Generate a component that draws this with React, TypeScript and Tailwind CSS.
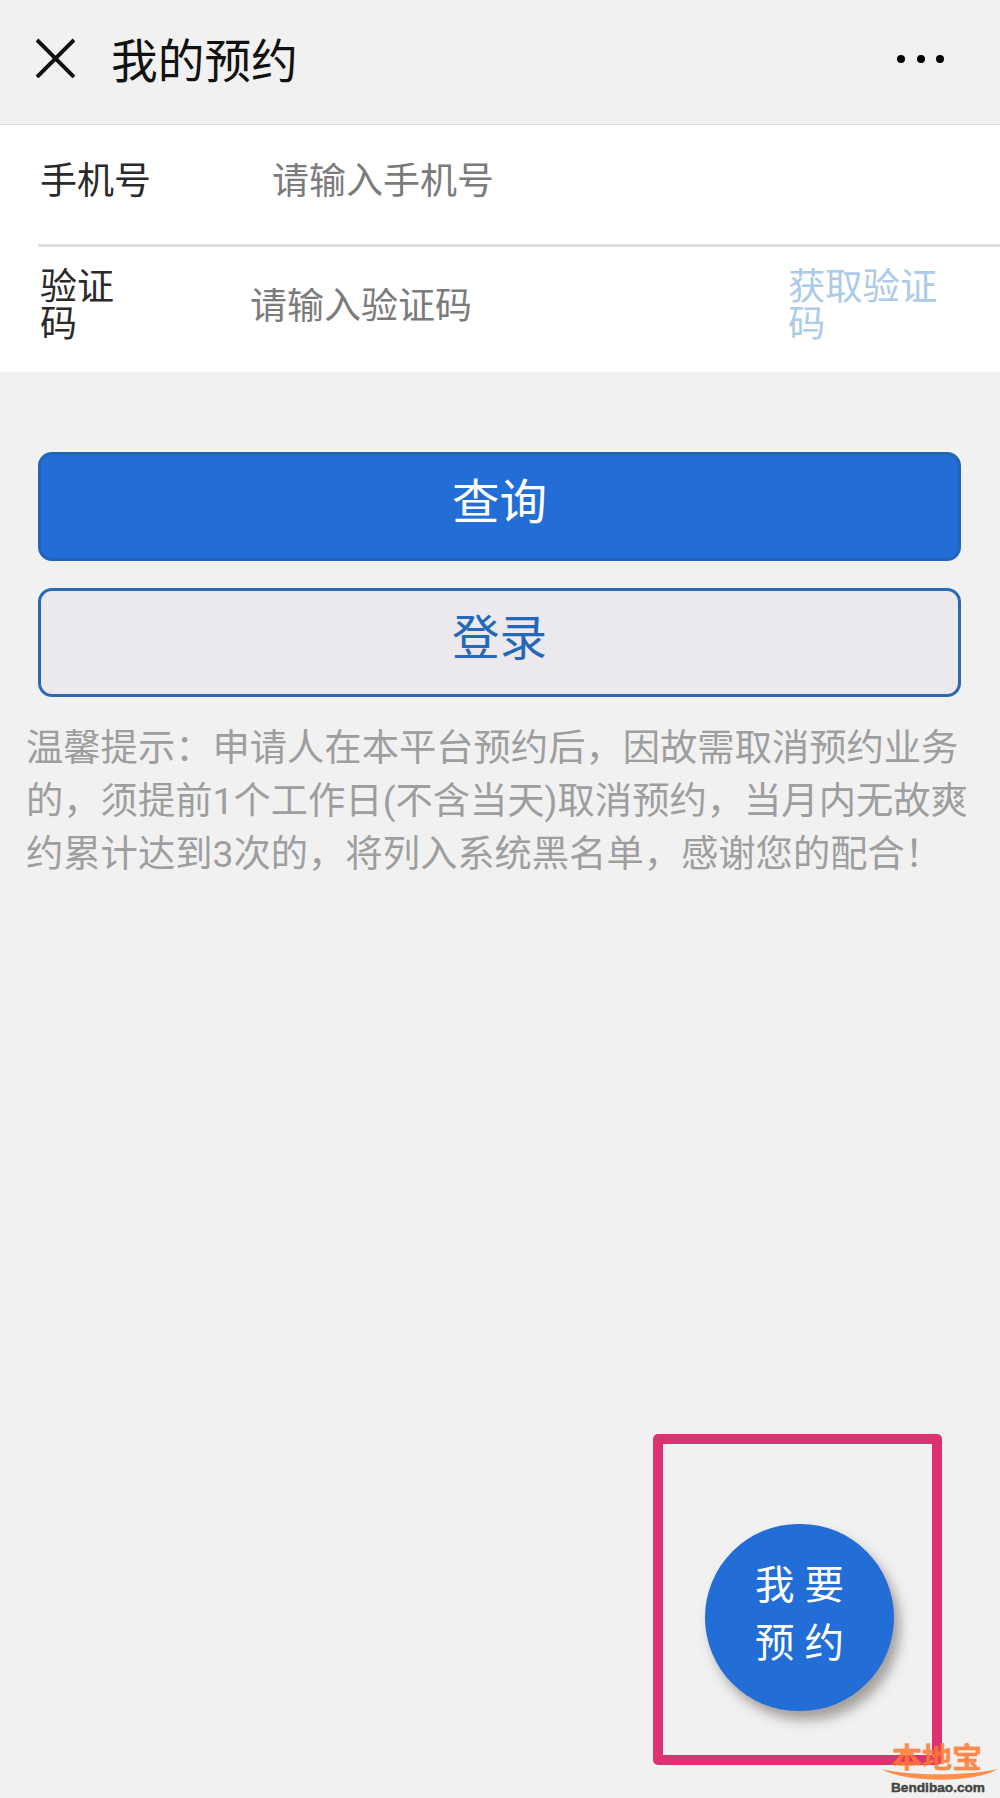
import React, { useState } from "react";

// Marca do site, sobreposta no canto inferior direito
function BendibaoLogo() {
  return (
    <svg width="122" height="68" viewBox="0 -10 122 68" className="absolute left-[878px] top-[1730px]">
      <text
        x="14"
        y="27.5"
        fontSize="28"
        fontWeight="700"
        textLength="90"
        lengthAdjust="spacingAndGlyphs"
        fill="#ff7a30"
        fillOpacity="0.85"
        stroke="#ff7a30"
        strokeWidth="0.4"
        fontFamily="'Noto Sans CJK SC', sans-serif"
      >
        本地宝
      </text>
      <path d="M3 29C32 36 90 36 120 29C96 43.5 28 43 3 29Z" fill="#fb8f4c" />
      <text
        x="13"
        y="51.5"
        fontSize="12.5"
        fontWeight="700"
        textLength="94"
        lengthAdjust="spacingAndGlyphs"
        fill="#444"
        stroke="#444"
        strokeWidth="0.4"
        fontFamily="'Liberation Sans', Arial, sans-serif"
      >
        Bendibao.com
      </text>
    </svg>
  );
}

export default function App() {
  const [phone, setPhone] = useState("");
  const [code, setCode] = useState("");

  return (
    <div className="relative w-[1000px] h-[1798px] overflow-hidden bg-[#f1f1f1] font-normal font-[Roboto,'Noto_Sans_CJK_SC',sans-serif]">
      {/* Barra superior */}
      <header className="flex h-[125px] items-center border-b border-[#dcdcdc] pl-9 pr-[56px] pb-1">
        <button aria-label="关闭" className="mt-[-5px]">
          <svg width="39" height="40" viewBox="0 0 39 40" fill="none" stroke="#111" strokeWidth="4">
            <path d="M1 2L38 39M38 2L1 39" />
          </svg>
        </button>
        <h1 className="ml-9 mt-[3px] text-[46.7px] leading-[60px] text-[#111]">我的预约</h1>
        <button aria-label="更多" className="ml-auto mt-[-2px] flex gap-[11.5px]">
          <span className="size-2 rounded-full bg-black" />
          <span className="size-2 rounded-full bg-black" />
          <span className="size-2 rounded-full bg-black" />
        </button>
      </header>

      {/* Formulário */}
      <section className="h-[247px] bg-white pl-[38px] text-[37px] leading-[37px]">
        <div className="flex h-[122px] items-start border-b-[3px] border-[#e1e1e1] pl-0.5 pt-[38px]">
          <label htmlFor="phone" className="w-[232px] text-[#2a2a2a]">手机号</label>
          <input
            id="phone"
            value={phone}
            onChange={(e) => setPhone(e.target.value)}
            placeholder="请输入手机号"
            className="h-[37px] w-[500px] outline-none placeholder:text-[#7b7b7b]"
          />
        </div>
        <div className="flex items-start pl-0.5 pt-[22px]">
          <label htmlFor="code" className="w-[80px] text-[#2a2a2a]">验证码</label>
          <input
            id="code"
            value={code}
            onChange={(e) => setCode(e.target.value)}
            placeholder="请输入验证码"
            className="ml-[130px] mt-[19px] h-[37px] w-[400px] outline-none placeholder:text-[#7b7b7b]"
          />
          <button className="ml-[138px] w-[160px] text-left text-[37.3px] text-[#abcbe8]">获取验证码</button>
        </div>
      </section>

      {/* Ações */}
      <div className="mt-20 flex flex-col gap-[27px] pl-[38px] pr-[39px] text-[47.5px]">
        <button className="h-[109px] rounded-[14px] border-[3px] border-[#2264b8] bg-[#226dd6] pb-2 leading-[60px] text-white">
          查询
        </button>
        <button className="h-[109px] rounded-[14px] border-[3px] border-[#2a6ab4] bg-[#ece9ee] pb-2 leading-[60px] text-[#2468ba]">
          登录
        </button>
      </div>

      <p className="mt-[25px] whitespace-nowrap pl-[26px] text-[37.3px] leading-[53px] text-[#9e9e9e]">
        温馨提示：申请人在本平台预约后，因故需取消预约业务
        <br />
        的，须提前1个工作日(不含当天)取消预约，当月内无故爽
        <br />
        约累计达到3次的，将列入系统黑名单，感谢您的配合！
      </p>

      {/* Botão flutuante com destaque */}
      <div className="absolute left-[653px] top-[1434px] h-[331px] w-[289px] rounded-[5px] border-[10px] border-[#dd3172]" />
      <button className="absolute left-[705px] top-[1524px] h-[187px] w-[189px] rounded-full bg-[#226dd6] pb-1.5 text-[39.5px] leading-[58px] text-white shadow-[6px_9px_12px_rgba(90,80,75,0.5)]">
        我 要
        <br />
        预 约
      </button>

      <BendibaoLogo />
    </div>
  );
}
